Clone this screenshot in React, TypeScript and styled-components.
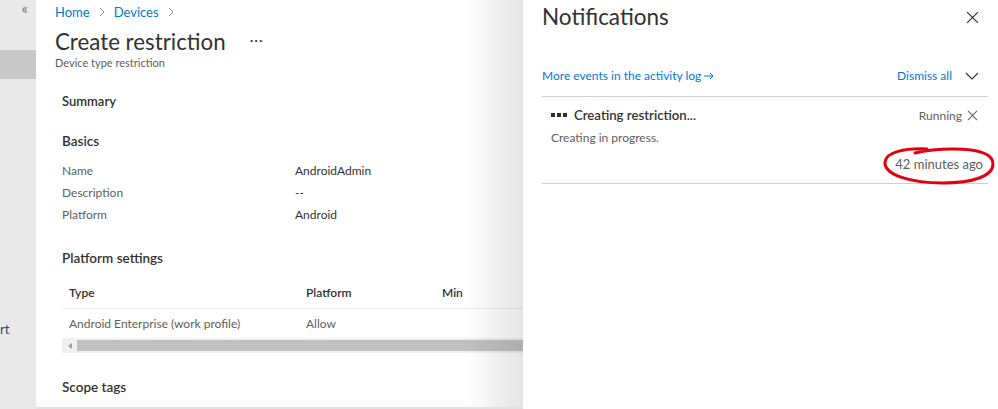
import React from "react"
import styled, { createGlobalStyle } from "styled-components"

const GlobalStyle = createGlobalStyle`
  html, body {
    margin: 0;
    padding: 0;
    background: #ffffff;
    font-family: "Segoe UI", Lato, "Noto Sans", sans-serif;
    color: #323130;
  }
  * {
    box-sizing: border-box;
  }
`

const Page = styled.div`
  display: flex;
  width: 998px;
  height: 409px;
  overflow: hidden;
  position: relative;
`

const SideNav = styled.div`
  width: 36px;
  flex-shrink: 0;
  background: #e9e9e9;
  display: flex;
  flex-direction: column;
`

const CollapseButton = styled.div`
  height: 18px;
  display: flex;
  justify-content: flex-end;
  align-items: center;
  padding: 0 8px 2px 0;
  color: #6b6b6b;
  font-size: 15px;
  line-height: 16px;
`

const NavItem = styled.div<{ selected?: boolean }>`
  height: ${(p) => (p.selected ? "29px" : "32px")};
  background: ${(p) => (p.selected ? "#c8c8c8" : "transparent")};
`

const NavLabel = styled.div`
  margin-top: 242px;
  font-size: 13px;
  line-height: 16px;
  color: #1c4a7c;
`

const Main = styled.div`
  width: 487px;
  flex-shrink: 0;
  background: #fff;
  padding: 2px 0 0 19px;
  position: relative;
  border-bottom: 2px solid #e1e1e1;
`

const Breadcrumb = styled.div`
  display: flex;
  align-items: center;
  gap: 9px;
  font-size: 13px;
  line-height: 20px;
  height: 20px;
  color: #0078d4;
`

const TitleRow = styled.div`
  display: flex;
  align-items: center;
  gap: 24px;
  margin-top: 6px;
  height: 28px;
`

const Title = styled.h1`
  margin: 0;
  font-size: 22.3px;
  line-height: 28px;
  font-weight: 400;
  color: #323130;
`

const More = styled.span`
  font-size: 14px;
  color: #323130;
  letter-spacing: 1px;
  margin-top: -6px;
`

const Subtitle = styled.div`
  font-size: 11px;
  line-height: 14px;
  color: #605e5c;
`

const Content = styled.div`
  padding-left: 7px;
  margin-top: 22px;
`

const SectionHeading = styled.div<{ top?: number; size?: number }>`
  font-size: ${(p) => p.size ?? 13.5}px;
  font-weight: 600;
  color: #323130;
  margin-top: ${(p) => p.top ?? 0}px;
  height: 18px;
  line-height: 18px;
`

const PropList = styled.div`
  display: grid;
  grid-template-columns: 233px 1fr;
  grid-auto-rows: 22px;
  margin-top: 10px;
  font-size: 12px;
  line-height: 18px;
  align-items: center;
`

const PropLabel = styled.div`
  color: #605e5c;
`

const PropValue = styled.div`
  color: #323130;
`

const Table = styled.div`
  margin-top: 11px;
  font-size: 12px;
  line-height: 18px;
`

const TableRow = styled.div<{ header?: boolean }>`
  display: grid;
  grid-template-columns: 237px 136px 1fr;
  height: ${(p) => (p.header ? "31px" : "29px")};
  align-items: center;
  padding-left: 7px;
  border-bottom: ${(p) => (p.header ? "1px solid #edebe9" : "none")};
  font-weight: ${(p) => (p.header ? 600 : 400)};
  color: ${(p) => (p.header ? "#323130" : "#605e5c")};
`

const Scrollbar = styled.div`
  display: flex;
  height: 15px;
  background: #f0f0f0;
`

const ScrollArrow = styled.div`
  width: 15px;
  display: flex;
  align-items: center;
  justify-content: center;
`

const ScrollThumb = styled.div`
  flex: 1;
  margin: 2px 0;
  background: #c1c1c1;
`

const PanelShadow = styled.div`
  position: absolute;
  top: 0;
  right: 0;
  width: 60px;
  height: 100%;
  background: linear-gradient(to right, rgba(0, 0, 0, 0), rgba(0, 0, 0, 0.1));
  pointer-events: none;
`

const Panel = styled.div`
  flex: 1;
  background: #fff;
  padding: 4px 10px 0 19px;
  display: flex;
  flex-direction: column;
`

const PanelHeader = styled.div`
  display: flex;
  justify-content: space-between;
  align-items: center;
  height: 26px;
  padding-right: 9px;
`

const PanelTitle = styled.h2`
  margin: 0;
  font-size: 22.5px;
  line-height: 26px;
  font-weight: 400;
  color: #323130;
`

const IconButton = styled.button`
  background: none;
  border: none;
  padding: 0;
  display: flex;
  align-items: center;
  justify-content: center;
  cursor: pointer;
`

const ActionBar = styled.div`
  display: flex;
  justify-content: space-between;
  align-items: center;
  margin-top: 36px;
  height: 20px;
  font-size: 12px;
  line-height: 18px;
  padding-right: 9px;
`

const Link = styled.a`
  color: #0078d4;
  text-decoration: none;
  display: flex;
  align-items: center;
  gap: 3px;
`

const Divider = styled.div<{ top?: number }>`
  height: 1px;
  background: #d2d0ce;
  margin-top: ${(p) => p.top ?? 0}px;
`

const NotificationItem = styled.div`
  padding: 8px 10px 10px 9px;
`

const NotificationTop = styled.div`
  display: flex;
  justify-content: space-between;
  align-items: center;
  height: 20px;
`

const NotificationTitle = styled.div`
  display: flex;
  align-items: center;
  gap: 7px;
  font-size: 13.2px;
  font-weight: 600;
  color: #323130;
`

const Dots = styled.div`
  display: flex;
  gap: 2px;

  & > span {
    width: 4px;
    height: 4px;
    background: #323130;
  }
`

const Status = styled.div`
  display: flex;
  align-items: center;
  gap: 5px;
  font-size: 12px;
  color: #605e5c;
`

const NotificationBody = styled.div`
  font-size: 12px;
  line-height: 18px;
  color: #605e5c;
  margin-top: 4px;
`

const Timestamp = styled.div`
  font-size: 13px;
  line-height: 18px;
  color: #605e5c;
  text-align: right;
  margin: 8px -5px 0 0;
  position: relative;
`

const Scribble = styled.svg`
  position: absolute;
  right: -12px;
  top: -8px;
  width: 112px;
  height: 38px;
  overflow: visible;
  pointer-events: none;
`

const Close = ({ size = 12, color = "#323130" }: { size?: number; color?: string }) => (
  <svg width={size} height={size} viewBox="0 0 12 12">
    <path d="M1 1 L11 11 M11 1 L1 11" stroke={color} strokeWidth="1.1" fill="none" />
  </svg>
)

const Chevron = () => (
  <svg width="6" height="10" viewBox="0 0 6 10">
    <path d="M1 1 L5 5 L1 9" stroke="#8a8886" strokeWidth="1" fill="none" />
  </svg>
)

export default function App() {
  return (
    <>
      <GlobalStyle />
      <Page>
        <SideNav>
          <CollapseButton>«</CollapseButton>
          <NavItem />
          <NavItem selected />
          <NavLabel>rt</NavLabel>
        </SideNav>

        <Main>
          <Breadcrumb>
            <span>Home</span>
            <Chevron />
            <span>Devices</span>
            <Chevron />
          </Breadcrumb>
          <TitleRow>
            <Title>Create restriction</Title>
            <More>···</More>
          </TitleRow>
          <Subtitle>Device type restriction</Subtitle>

          <Content>
            <SectionHeading size={13}>Summary</SectionHeading>
            <SectionHeading top={22}>Basics</SectionHeading>
            <PropList>
              <PropLabel>Name</PropLabel>
              <PropValue>AndroidAdmin</PropValue>
              <PropLabel>Description</PropLabel>
              <PropValue>--</PropValue>
              <PropLabel>Platform</PropLabel>
              <PropValue>Android</PropValue>
            </PropList>
            <SectionHeading top={23}>Platform settings</SectionHeading>
            <Table>
              <TableRow header>
                <div>Type</div>
                <div>Platform</div>
                <div>Min</div>
              </TableRow>
              <TableRow>
                <div>Android Enterprise (work profile)</div>
                <div>Allow</div>
                <div />
              </TableRow>
              <Scrollbar>
                <ScrollArrow>
                  <svg width="4" height="6" viewBox="0 0 4 6">
                    <path d="M4 0 L0 3 L4 6 Z" fill="#a0a0a0" />
                  </svg>
                </ScrollArrow>
                <ScrollThumb />
              </Scrollbar>
            </Table>
            <SectionHeading top={25}>Scope tags</SectionHeading>
          </Content>
          <PanelShadow />
        </Main>

        <Panel>
          <PanelHeader>
            <PanelTitle>Notifications</PanelTitle>
            <IconButton>
              <Close size={13} />
            </IconButton>
          </PanelHeader>

          <ActionBar>
            <Link>
              More events in the activity log
              <svg width="10" height="8" viewBox="0 0 10 8">
                <path d="M0 4 H9 M6 1 L9 4 L6 7" stroke="#0078d4" strokeWidth="1" fill="none" />
              </svg>
            </Link>
            <Link>
              Dismiss all
              <svg width="14" height="8" viewBox="0 0 14 8" style={{ marginLeft: 10 }}>
                <path d="M1 1 L7 7 L13 1" stroke="#323130" strokeWidth="1.1" fill="none" />
              </svg>
            </Link>
          </ActionBar>
          <Divider top={10} />

          <NotificationItem>
            <NotificationTop>
              <NotificationTitle>
                <Dots>
                  <span />
                  <span />
                  <span />
                </Dots>
                Creating restriction...
              </NotificationTitle>
              <Status>
                Running
                <Close size={11} color="#605e5c" />
              </Status>
            </NotificationTop>
            <NotificationBody>Creating in progress.</NotificationBody>
            <Timestamp>
              42 minutes ago
              <Scribble viewBox="0 0 112 38">
                <path
                  d="M44 2 C 22 1, 3 5, 2 15 C 1 28, 28 36, 60 36 C 90 36, 110 29, 110 17 C 110 6, 94 2, 70 2 C 56 2, 44 3, 32 6"
                  stroke="#e0000f"
                  strokeWidth="3"
                  fill="none"
                  strokeLinecap="round"
                />
              </Scribble>
            </Timestamp>
          </NotificationItem>
          <Divider />
        </Panel>
      </Page>
    </>
  )
}
